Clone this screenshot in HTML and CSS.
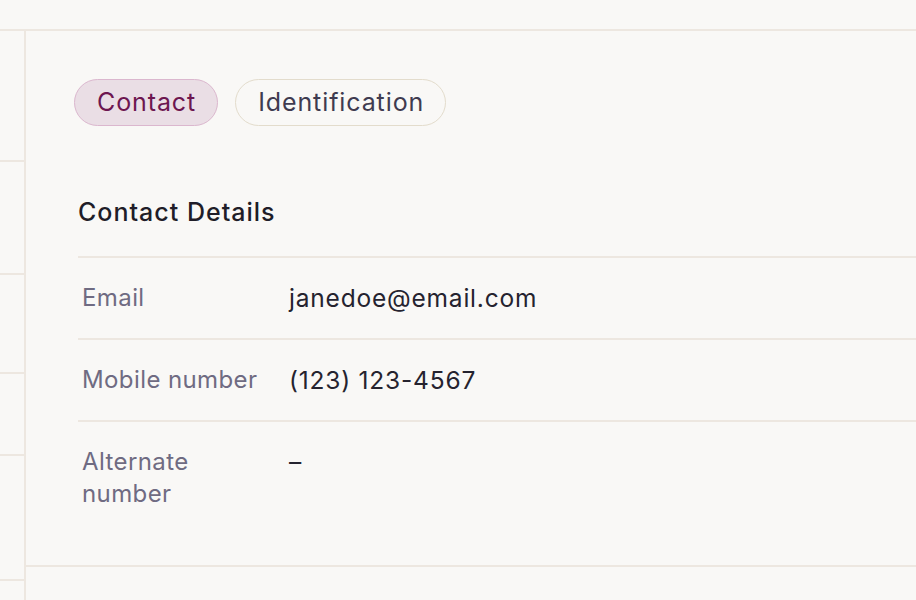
FILE: index.html
```html
<!DOCTYPE html>
<html lang="en">
<head>
<meta charset="utf-8">
<title>Contact Details</title>
<link rel="stylesheet" href="styles.css">
</head>
<body>
<header class="topbar"></header>
<div class="layout">
  <aside class="sidebar">
    <div class="nav-item nav-1"></div>
    <div class="nav-item nav-2"></div>
    <div class="nav-item nav-3"></div>
    <div class="nav-item nav-4"></div>
    <div class="nav-item nav-5"></div>
  </aside>
  <main class="main">
    <section class="panel">
      <nav class="tabs">
        <button class="tab tab-active">Contact</button>
        <button class="tab">Identification</button>
      </nav>
      <h2 class="section-title">Contact Details</h2>
      <dl class="details">
        <div class="row">
          <dt class="label">Email</dt>
          <dd class="value">janedoe@email.com</dd>
        </div>
        <div class="row">
          <dt class="label">Mobile number</dt>
          <dd class="value">(123) 123-4567</dd>
        </div>
        <div class="row">
          <dt class="label">Alternate number</dt>
          <dd class="value">–</dd>
        </div>
      </dl>
    </section>
  </main>
</div>
</body>
</html>
```
FILE: styles.css
```css
* { box-sizing: border-box; }

html, body {
  margin: 0;
  padding: 0;
  background: #f9f8f6;
  font-family: "Inter", "Liberation Sans", sans-serif;
  color: #25232f;
}

body {
  width: 916px;
  height: 600px;
  overflow: hidden;
}

.topbar {
  height: 31px;
  border-bottom: 2px solid #ede7e0;
}

.layout {
  display: flex;
  height: 569px;
}

.sidebar {
  width: 26px;
  flex: none;
  border-right: 2px solid #ede7e0;
  display: flex;
  flex-direction: column;
}

.nav-item {
  flex: none;
  border-bottom: 2px solid #ede7e0;
}
.nav-1 { height: 131px; }
.nav-2 { height: 113px; }
.nav-3 { height: 99px; }
.nav-4 { height: 82px; }
.nav-5 { height: 125px; }

.main {
  flex: 1;
  min-width: 0;
}

.panel {
  padding: 48px 0 31px 48px;
  border-bottom: 2px solid #ede7e0;
}

.tabs {
  display: flex;
  gap: 17px;
}

.tab {
  height: 47px;
  padding: 0 21px 0 22px;
  border-radius: 24px;
  border: 1.5px solid #e3dccc;
  background: #f9f8f6;
  color: #3f3b50;
  font-family: inherit;
  font-size: 25px;
  letter-spacing: 0.9px;
  line-height: 1;
}

.tab-active {
  background: #eadee5;
  border-color: #dbb7ce;
  color: #6d1650;
}

.section-title {
  margin: 70px 0 0 4px;
  font-size: 25px;
  font-weight: 500;
  letter-spacing: 1px;
  line-height: 32px;
  color: #1f1d28;
}

.details {
  margin: 28px 0 0 4px;
}

.row {
  display: grid;
  grid-template-columns: 190px 1fr;
  column-gap: 17px;
  padding: 24px 0 24px 4px;
  border-top: 2px solid #ede7e0;
}

.label {
  margin: 0;
  font-size: 24px;
  letter-spacing: 0.4px;
  line-height: 32px;
  color: #6f6b82;
}

.value {
  margin: 0;
  font-size: 24.5px;
  letter-spacing: 0.8px;
  line-height: 32px;
  color: #25232f;
}
```
